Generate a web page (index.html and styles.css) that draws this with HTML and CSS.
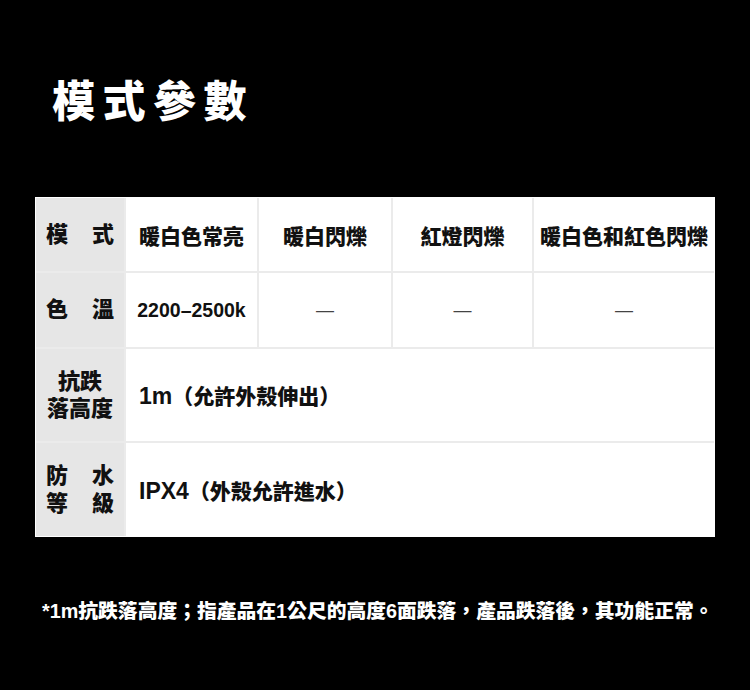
FILE: index.html
```html
<!DOCTYPE html>
<html lang="zh-Hant">
<head>
<meta charset="utf-8">
<title>模式參數</title>
<link rel="stylesheet" href="styles.css">
</head>
<body>
<main class="page">
  <h1 class="title">模式參數</h1>
  <div class="frame">
    <table class="spec">
      <colgroup>
        <col class="c-label">
        <col class="c-1">
        <col class="c-2">
        <col class="c-3">
        <col class="c-4">
      </colgroup>
      <tr class="r-mode">
        <th class="label"><span class="split"><span>模</span><span>式</span></span></th>
        <td class="head">暖白色常亮</td>
        <td class="head">暖白閃爍</td>
        <td class="head">紅燈閃爍</td>
        <td class="head">暖白色和紅色閃爍</td>
      </tr>
      <tr class="r-temp">
        <th class="label"><span class="split"><span>色</span><span>溫</span></span></th>
        <td class="num">2200–2500k</td>
        <td class="dash">—</td>
        <td class="dash">—</td>
        <td class="dash">—</td>
      </tr>
      <tr class="r-drop">
        <th class="label"><span class="stack"><span>抗跌</span><span>落高度</span></span></th>
        <td class="value" colspan="4"><span class="latin">1m</span>（允許外殼伸出）</td>
      </tr>
      <tr class="r-water">
        <th class="label">
          <span class="stack">
            <span class="split"><span>防</span><span>水</span></span>
            <span class="split"><span>等</span><span>級</span></span>
          </span>
        </th>
        <td class="value" colspan="4"><span class="latin">IPX4</span>（外殼允許進水）</td>
      </tr>
    </table>
  </div>
  <p class="note">*1m抗跌落高度；指產品在1公尺的高度6面跌落，產品跌落後，其功能正常。</p>
</main>
</body>
</html>
```
FILE: styles.css
```css
html, body {
  margin: 0;
  padding: 0;
  background: #000;
}

body {
  width: 750px;
  height: 690px;
  overflow: hidden;
  font-family: "Liberation Sans", "Noto Sans CJK TC", sans-serif;
  font-weight: 700;
  color: #111;
}

.page {
  padding: 77px 35px 0 35px;
}

.title {
  margin: 0 0 70px 17px;
  font-size: 43px;
  line-height: 50px;
  letter-spacing: 7.5px;
  font-weight: 900;
  color: #fff;
}

.frame {
  width: 678px;
  padding: 1px;
  background: #fff;
}

.spec {
  width: 678px;
  table-layout: fixed;
  border-collapse: collapse;
  border-style: hidden;
}

.c-label { width: 89px; }
.c-1 { width: 133px; }
.c-2 { width: 134px; }
.c-3 { width: 141px; }
.c-4 { width: 181px; }

.spec th,
.spec td {
  border: 2px solid #ebebeb;
  padding: 0;
  vertical-align: middle;
}

.r-mode { height: 74px; }
.r-temp { height: 76px; }
.r-drop { height: 94px; }
.r-water { height: 94px; }

.label {
  background: #e6e6e6;
  font-size: 22px;
  font-weight: 900;
  padding: 0 10px !important;
  text-align: center;
}

.split {
  display: flex;
  justify-content: space-between;
  line-height: 28px;
}

.stack {
  display: flex;
  flex-direction: column;
  line-height: 27px;
}

.head {
  text-align: center;
  font-size: 21px;
  font-weight: 900;
}

.num {
  text-align: center;
  font-size: 19.5px;
}

.dash {
  text-align: center;
  font-size: 18px;
  font-weight: 400;
  color: #444;
}

.value {
  font-size: 21px;
  font-weight: 900;
  padding-left: 13px !important;
}

.latin {
  font-size: 23px;
  font-weight: 700;
}

.note {
  margin: 60px 0 0 7px;
  font-size: 19.8px;
  line-height: 28px;
  font-weight: 900;
  color: #fff;
  white-space: nowrap;
}
```
